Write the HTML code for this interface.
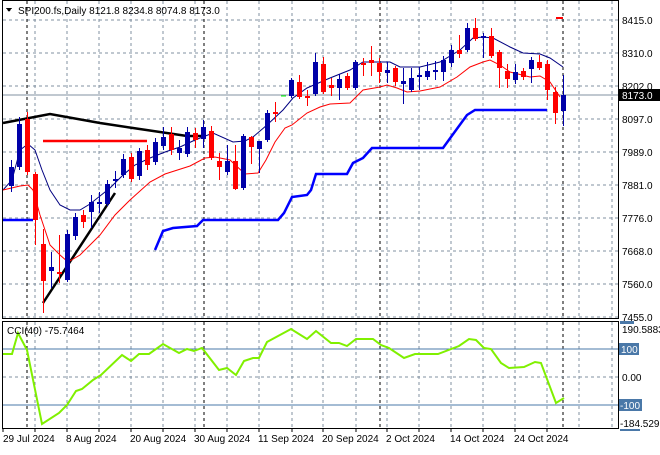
<!DOCTYPE html><html><head><meta charset="utf-8"><style>
body{margin:0;background:#fff;width:660px;height:450px;overflow:hidden;font-family:"Liberation Sans",sans-serif}
svg text{font-family:"Liberation Sans",sans-serif;font-size:10px}
</style></head><body>
<svg id="s" width="660" height="450" xmlns="http://www.w3.org/2000/svg" shape-rendering="crispEdges">
<rect width="660" height="450" fill="#fff"/>
<g id="grid" stroke="#8090a0" stroke-dasharray="3,3" stroke-width="1"></g>
<line x1="3" y1="95" x2="618" y2="95" stroke="#8090a0"/>
<g id="vb" stroke="#000" stroke-dasharray="3,3"></g>
<g shape-rendering="auto" fill="none">
<polyline stroke="#0000ff" stroke-width="2.5" points="3,220 33,220"/>
<polyline stroke="#0000ff" stroke-width="2.5" points="155,250 163,231 173,228 197,226 203,220 278,220 284,213 292,197 307,195 311,190 316,174 347,174 353,163 363,158 372,148 443,148 467,115 475,110 547,110"/>
<polyline stroke="#000" stroke-width="2.5" points="3,123 50,114 100,123 133,128 187,136 203,136"/>
<polyline stroke="#000" stroke-width="2.5" points="43,303 115,193"/>
<polyline stroke="#ff0000" stroke-width="2.5" points="43,141 147,141"/>
<polyline stroke="#000080" stroke-width="1" points="3,190 12,180 20,150 28,144 35,150 42,170 50,190 60,205 70,210 80,210 90,204 100,196 110,188 123,175 135,165 150,158 165,152 180,147 195,140 213,133 233,142 245,141 253,137 267,125 283,110 293,98 307,88 330,78 350,70 363,62 390,62 400,67 420,67 440,62 460,50 473,38 483,37 493,38 510,47 523,53 540,54 550,58 563,67"/>
<polyline stroke="#ff0000" stroke-width="1" points="3,190 20,186 28,185 33,190 40,215 50,245 60,255 68,262 80,255 90,245 100,235 115,215 130,200 150,182 165,174 190,166 205,158 215,157 230,160 245,174 258,173 266,160 275,142 285,128 292,125 307,113 320,107 330,104 350,103 363,90 380,87 387,85 397,88 407,92 420,91 440,87 457,77 470,67 483,62 490,60 500,65 510,72 530,77 540,76 550,82 560,97"/>
</g>
<g id="c"></g>
<line x1="281" y1="96" x2="286" y2="96" stroke="#00ff00" stroke-width="1"/>
<line x1="556" y1="18" x2="563" y2="18" stroke="#ff0000" stroke-width="2"/>
<!-- borders -->
<rect x="2.5" y="0.5" width="616" height="318" fill="none" stroke="#000"/>
<rect x="2.5" y="321.5" width="616" height="107" fill="none" stroke="#000"/>
<!-- CCI -->
<line x1="3" y1="349" x2="618" y2="349" stroke="#4a78a8"/>
<line x1="3" y1="405" x2="618" y2="405" stroke="#4a78a8"/>
<line x1="3" y1="377" x2="618" y2="377" stroke="#8090a0" stroke-dasharray="3,3"/>
<polyline shape-rendering="auto" fill="none" stroke="#80f000" stroke-width="2" points="3,354 12,354 18,333 27,350 42,424 59,413 67,405 76,391 82,389 93,380 101,375 122,355 131,361 139,354 149,354 163,344 179,353 187,349 194,351 202,348 219,370 227,368 236,375 244,361 253,358 259,358 267,342 291,329 307,339 316,331 331,343 339,343 347,346 356,339 373,339 381,345 389,348 404,358 415,354 438,354 459,346 469,339 476,340 484,348 491,349 501,363 509,368 524,367 535,362 541,363 556,403 564,398"/>
<!-- labels -->
<path d="M6,8 L12,8 L9,12 Z" fill="#000"/>
<text x="18" y="14" fill="#000">SPI200.fs,Daily  8121.8 8234.8 8074.8 8173.0</text>
<text x="7" y="334" fill="#000">CCI(40) -75.7464</text>
<g fill="#000">
<text x="622" y="24">8415.0</text><text x="622" y="57">8310.0</text><text x="622" y="90">8202.0</text>
<text x="622" y="123">8097.0</text><text x="622" y="156">7989.0</text><text x="622" y="189">7881.0</text>
<text x="622" y="222">7776.0</text><text x="622" y="255">7668.0</text><text x="622" y="288">7560.0</text>
<text x="622" y="321">7455.0</text>
<text x="622" y="333">190.5883</text><text x="622" y="381">0.00</text><text x="620" y="427">-184.529</text>
</g>
<rect x="619" y="89" width="41" height="12" fill="#000"/><text x="622" y="99" fill="#fff">8173.0</text>
<rect x="619" y="343" width="20" height="12" fill="#4a78a8"/><text x="621" y="353" fill="#fff">100</text>
<rect x="619" y="399" width="23" height="12" fill="#4a78a8"/><text x="620" y="409" fill="#fff">-100</text>
<rect x="620" y="321" width="14" height="3" fill="#4a78a8"/><rect x="620" y="429" width="20" height="2" fill="#4a78a8"/>
<g fill="#000">
<text x="3" y="442">29 Jul 2024</text><text x="66" y="442">8 Aug 2024</text><text x="130" y="442">20 Aug 2024</text>
<text x="194" y="442">30 Aug 2024</text><text x="258" y="442">11 Sep 2024</text><text x="322" y="442">20 Sep 2024</text>
<text x="386" y="442">2 Oct 2024</text><text x="450" y="442">14 Oct 2024</text><text x="514" y="442">24 Oct 2024</text>
</g>
</svg>
<script>
var NS="http://www.w3.org/2000/svg";
function el(p,t,a){var e=document.createElementNS(NS,t);for(var k in a)e.setAttribute(k,a[k]);p.appendChild(e);return e;}
var g=document.getElementById('grid');
[20,53,86,119,152,185,218,251,284,317].forEach(function(y){el(g,'line',{x1:3,y1:y,x2:618,y2:y});});
var xs=[35,67,99,131,163,195,227,259,292,323,356,387,419,451,483,515,547,579,612];
xs.forEach(function(x){el(g,'line',{x1:x,y1:1,x2:x,y2:318});el(g,'line',{x1:x,y1:322,x2:x,y2:428});});
var vb=document.getElementById('vb');
[27,204,380,563].forEach(function(x){el(vb,'line',{x1:x,y1:1,x2:x,y2:318});el(vb,'line',{x1:x,y1:322,x2:x,y2:428});});
var s=document.getElementById('s');
[3,35,67,99,131,163,195,227,259,292,323,356,387,419,451,483,515,547].forEach(function(x){el(s,'line',{x1:x,y1:429,x2:x,y2:432,stroke:'#000'});});
var C=[[11,167,186,160,192,'b'],[19,124,167,117,170,'b'],[27,119,172,112,175,'r'],[35,174,220,172,245,'r'],[43,244,281,229,313,'r'],[51,267,271,252,288,'b'],[59,272,274,235,283,'r'],[67,234,280,230,282,'b'],[75,217,236,213,240,'b'],[83,215,222,210,228,'r'],[91,202,212,195,228,'b'],[99,202,204,192,213,'b'],[107,184,204,180,206,'b'],[115,179,181,171,188,'b'],[123,159,175,154,178,'b'],[131,157,179,153,182,'r'],[139,151,176,148,180,'b'],[147,150,165,145,170,'r'],[155,142,162,138,165,'b'],[163,137,146,127,150,'b'],[171,134,150,127,155,'r'],[179,148,153,140,160,'b'],[187,132,154,127,157,'b'],[195,133,140,128,148,'r'],[203,127,139,120,148,'b'],[211,131,158,126,160,'r'],[219,161,167,153,180,'r'],[227,161,172,145,175,'b'],[235,161,189,145,190,'r'],[243,136,188,134,190,'b'],[251,137,147,136,164,'r'],[259,141,149,141,173,'b'],[267,113,140,110,142,'b'],[275,112,114,102,122,'r'],[291,80,96,78,98,'b'],[299,82,97,75,99,'r'],[307,96,98,90,106,'r'],[315,62,94,53,96,'b'],[323,64,92,57,94,'r'],[331,85,88,78,96,'r'],[339,79,88,74,100,'b'],[347,76,88,73,90,'r'],[355,62,88,60,90,'b'],[363,63,65,58,76,'r'],[371,60,63,46,76,'r'],[379,63,72,58,83,'r'],[387,70,73,62,83,'b'],[395,68,82,66,86,'r'],[403,81,84,68,104,'b'],[411,78,90,68,92,'b'],[419,75,76,67,90,'b'],[427,71,77,62,80,'b'],[435,70,72,61,80,'b'],[443,60,72,56,81,'b'],[451,50,63,45,67,'b'],[459,50,54,35,58,'r'],[467,28,50,23,52,'b'],[475,28,39,18,41,'r'],[483,36,38,33,58,'b'],[491,36,56,28,58,'r'],[499,52,68,50,88,'r'],[507,71,79,64,88,'r'],[515,72,80,64,84,'b'],[523,71,77,68,80,'r'],[531,60,69,57,83,'b'],[539,62,68,55,70,'r'],[547,64,90,60,100,'r'],[555,92,113,87,124,'r'],[563,95,111,75,126,'b']];
var cg=document.getElementById('c');
C.forEach(function(c){var col=c[5]=='b'?'#0000a8':'#ff0000';
el(cg,'rect',{x:c[0],y:c[3],width:1,height:c[4]-c[3],fill:col});
var h=Math.max(2,c[2]-c[1]);el(cg,'rect',{x:c[0]-2,y:c[1],width:5,height:h,fill:col});});
</script>
</body></html>
